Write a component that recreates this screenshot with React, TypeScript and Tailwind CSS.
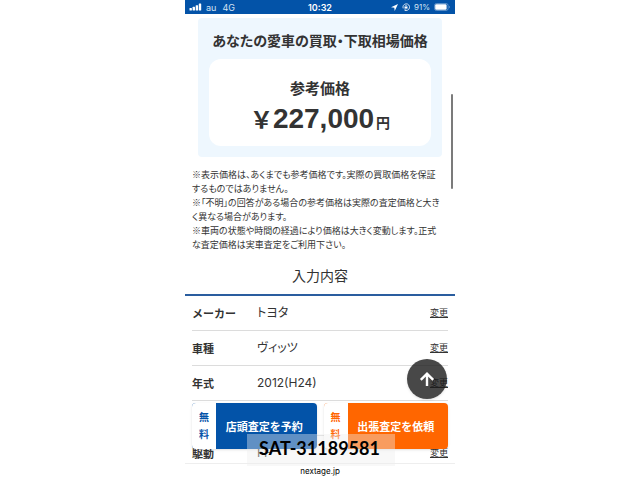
import React from 'react';

interface Spec {
  label: string;
  value: string;
}

const SPECS: Spec[] = [
  { label: 'メーカー', value: 'トヨタ' },
  { label: '車種', value: 'ヴィッツ' },
  { label: '年式', value: '2012(H24)' },
  { label: '', value: '' },
  { label: '駆動', value: 'FF' },
];

const NOTES = [
  '※表示価格は、あくまでも参考価格です。実際の買取価格を保証するものではありません。',
  '※「不明」の回答がある場合の参考価格は実際の査定価格と大きく異なる場合があります。',
  '※車両の状態や時間の経過により価格は大きく変動します。正式な査定価格は実車査定をご利用下さい。',
];

const StatusBar: React.FC = () => (
  <header className="grid h-[14px] grid-cols-3 items-center bg-[#0353a8] px-1 font-['Inter','Noto_Sans_CJK_JP',sans-serif] text-[9px] leading-none text-white">
    <div className="flex items-center">
      <svg width="13" height="8" viewBox="0 0 13 8" fill="currentColor" aria-hidden="true">
        <rect x="0.5" y="5" width="2.4" height="2.6" rx="0.5" />
        <rect x="3.6" y="3.8" width="2.4" height="3.8" rx="0.5" />
        <rect x="6.7" y="2.2" width="2.4" height="5.4" rx="0.5" />
        <rect x="9.8" y="0.6" width="2.4" height="7" rx="0.5" />
      </svg>
      <span className="ml-1 text-[#d5e4f4]">au</span>
      <span className="ml-[6px] text-[#d5e4f4]">4G</span>
    </div>
    <div className="text-center font-semibold">10:32</div>
    <div className="flex items-center justify-end gap-1">
      <svg width="7" height="7" viewBox="0 0 7 7" fill="currentColor" aria-hidden="true">
        <path d="M7 0 0 3.3 3.3 3.7 3.7 7Z" />
      </svg>
      <svg width="8" height="8" viewBox="0 0 8 8" fill="none" stroke="currentColor" strokeWidth="0.8" aria-hidden="true">
        <path d="M1.2 5.4A3.3 3.3 0 1 1 2.6 7M2.6 7 4.4 7.3" />
        <rect x="2.5" y="3.6" width="3" height="2" fill="currentColor" stroke="none" />
        <path d="M3.2 3.8V3.2a.8.8 0 0 1 1.6 0v.6" strokeWidth="0.6" />
      </svg>
      <span className="text-[8px] text-[#d5e4f4]">91%</span>
      <svg width="17" height="8" viewBox="0 0 17 8" aria-hidden="true">
        <rect x="0.5" y="0.5" width="13.6" height="7" rx="2" fill="none" stroke="#7ea6d2" strokeWidth="0.7" />
        <rect x="1.2" y="1.2" width="11.4" height="5.6" rx="1.2" fill="#fff" />
        <path d="M15 2.8a1.4 1.4 0 0 1 0 2.4Z" fill="#7ea6d2" />
      </svg>
    </div>
  </header>
);

const PriceCard: React.FC = () => (
  <section className="mx-[13px] mt-1 rounded-sm bg-[#eef7fe] px-[11px] pt-3 pb-[11px] text-center font-bold">
    <h1 className="text-[14px] leading-5 whitespace-nowrap [font-feature-settings:'palt']">あなたの愛車の買取・下取相場価格</h1>
    <div className="mt-[9px] rounded-xl bg-white pt-[19px] pb-[11px]">
      <h2 className="text-[15px] leading-5">参考価格</h2>
      <p className="mt-[5px] flex h-8 items-baseline justify-center font-['Liberation_Sans','Noto_Sans_CJK_JP',sans-serif] text-[28px] leading-8">
        <span className="font-['Noto_Sans_CJK_JP',sans-serif] text-[23px] leading-6">￥</span>
        <span className="leading-8">227,000</span>
        <span className="ml-[2px] text-[14px] leading-6">円</span>
      </p>
    </div>
  </section>
);

const SpecRow: React.FC<{ spec: Spec }> = ({ spec }) => (
  <div className="flex h-[35px] items-center border-b border-[#dcdcdc]">
    <dt className="w-[65px] text-[11px] font-bold">{spec.label}</dt>
    <dd className="flex-1 font-['Inter','Noto_Sans_CJK_JP',sans-serif] text-[12px] [font-feature-settings:'palt']">{spec.value}</dd>
    <dd className="flex text-[9px]">
      <a href="#edit" aria-label={`${spec.label}を変更`} className="underline underline-offset-1">変更</a>
    </dd>
  </div>
);

export default function App() {
  return (
    <div className="min-h-screen bg-white font-['Noto_Sans_CJK_JP',sans-serif] text-[#333]">
      <div className="relative mx-auto flex h-screen w-full max-w-[270px] flex-col overflow-hidden">
        <StatusBar />

        <main className="min-h-0 flex-1 overflow-hidden">
          <PriceCard />

          <div className="pt-[11px] pr-[13px] pl-[7px] text-[9px] leading-[14px] [font-feature-settings:'palt']">
            {NOTES.map((note) => (
              <p key={note}>{note}</p>
            ))}
          </div>

          <h2 className="mt-3 border-b-2 border-[#2a5d9f] pt-px pb-[9px] text-center text-[14px] leading-5">入力内容</h2>
          <dl className="px-[7px]">
            {SPECS.map((spec, idx) => (
              <SpecRow key={idx} spec={spec} />
            ))}
          </dl>
        </main>

        <footer className="border-t border-[#eee] bg-white pb-[2px] text-center font-['Inter',sans-serif] text-[8px] leading-[14px] text-black">nextage.jp</footer>

        {/* Scroll indicator */}
        <div className="absolute top-[94px] right-[2px] h-[95px] w-[2px] rounded-full bg-[#7b7b7b]" />

        {/* Back to top */}
        <button type="button" aria-label="ページの先頭へ" className="absolute right-2 bottom-[81px] flex size-10 items-center justify-center rounded-full bg-[#1a1a1a]/80 shadow">
          <svg width="16" height="16" viewBox="0 0 16 16" fill="none" stroke="#fff" strokeWidth="2.4" aria-hidden="true">
            <path d="M8 15V3M1.8 8.8 8 2.6 14.2 8.8" />
          </svg>
        </button>

        {/* Booking buttons */}
        <div className="absolute inset-x-[7px] bottom-[31px] grid grid-cols-2 gap-[7px] text-[11px] font-bold">
          <button type="button" className="flex h-[46px] overflow-hidden rounded bg-[#0353a8] text-white shadow">
            <span className="flex h-full w-6 items-center justify-center bg-white pb-[2px] text-[10px] leading-[17px] text-[#0353a8]">無<br />料</span>
            <span className="flex h-full flex-1 items-center justify-center pr-1 whitespace-nowrap">店頭査定を予約</span>
          </button>
          <button type="button" className="flex h-[46px] overflow-hidden rounded bg-[#ff6600] text-white shadow">
            <span className="flex h-full w-6 items-center justify-center bg-white pb-[2px] text-[10px] leading-[17px] text-[#ff6600]">無<br />料</span>
            <span className="flex h-full flex-1 items-center justify-center pr-1 whitespace-nowrap">出張査定を依頼</span>
          </button>
        </div>

        {/* Stock number */}
        <div className="absolute bottom-[14px] left-[62px] w-[148px] bg-[#eee]/40 pr-[3px] pb-1 text-center font-['Lato',sans-serif] text-[18px] leading-7 font-bold text-black">SAT-31189581</div>
      </div>
    </div>
  );
}
